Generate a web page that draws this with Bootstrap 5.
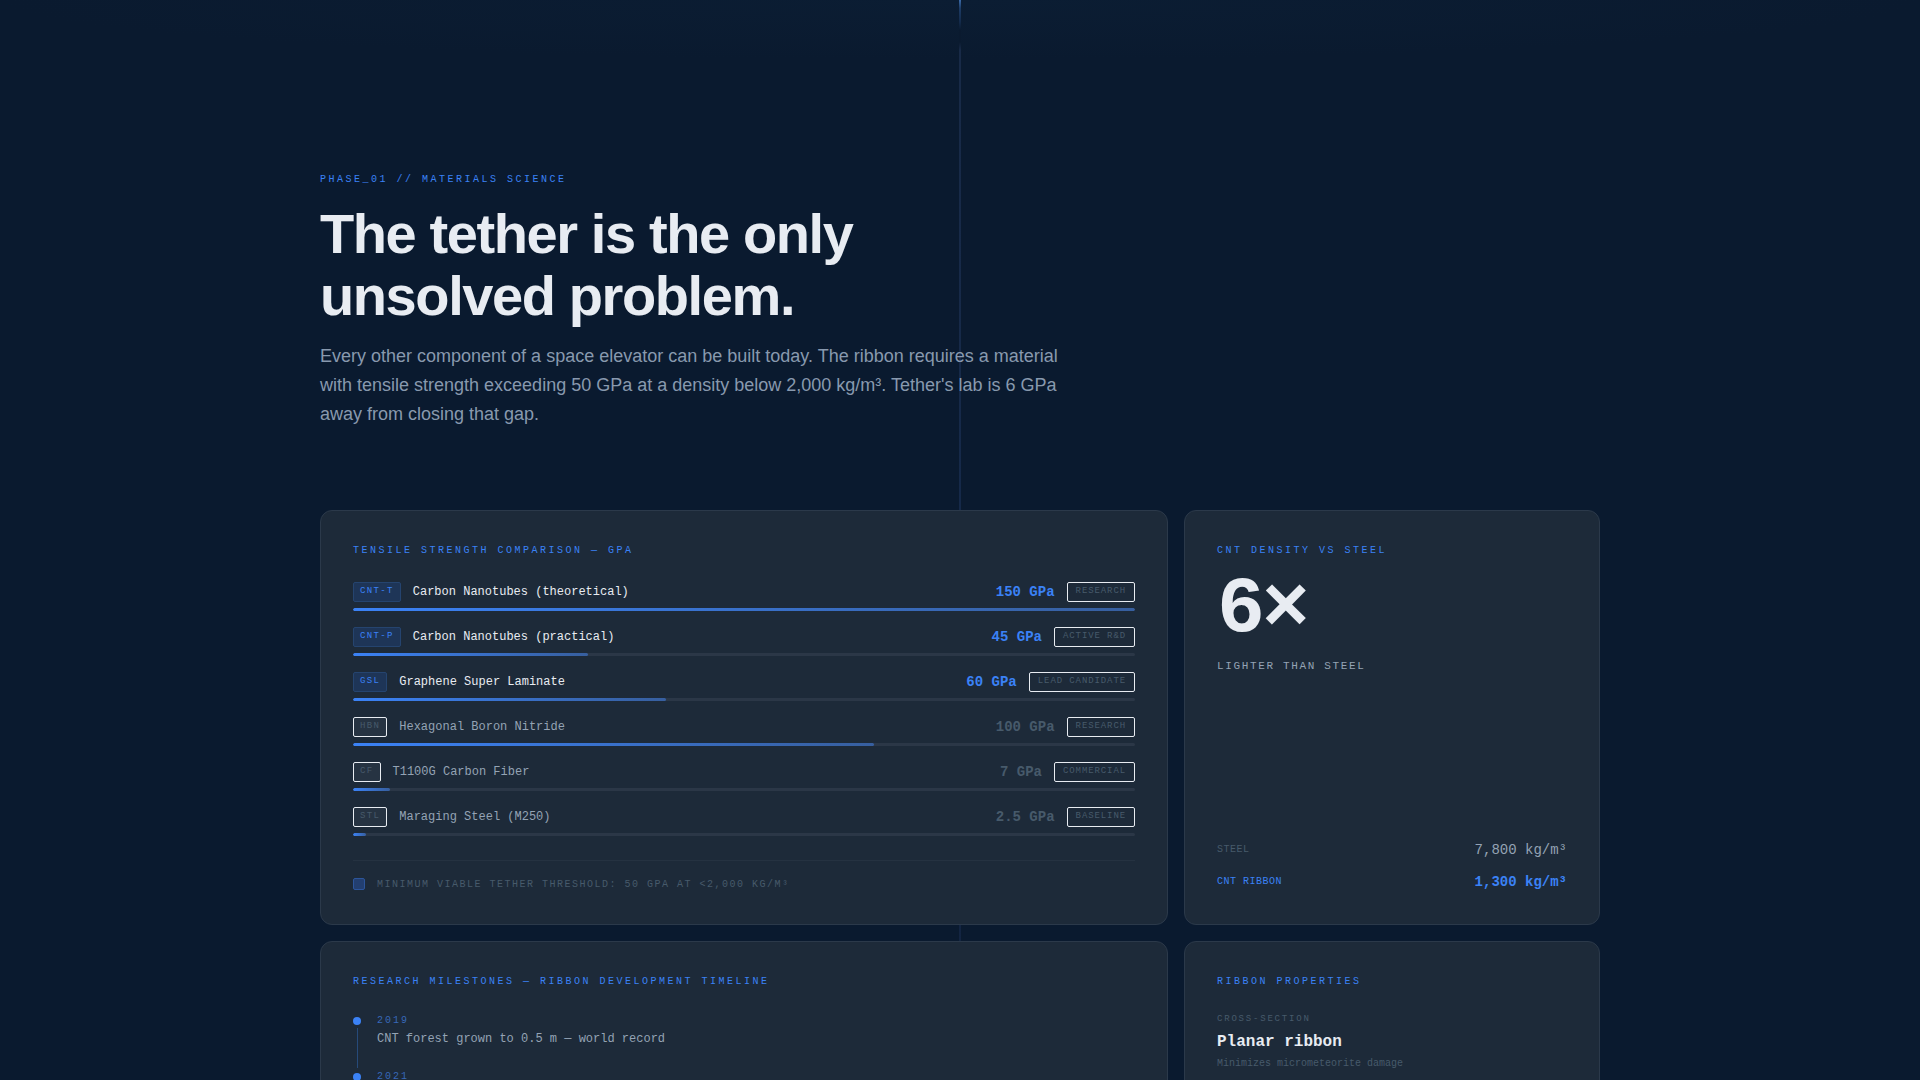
<!DOCTYPE html>
<html lang="en">
<head>
<meta charset="utf-8">
<meta name="viewport" content="width=device-width, initial-scale=1">
<title>Tether — Materials Science</title>
<link href="https://cdn.jsdelivr.net/npm/bootstrap@5.3.0/dist/css/bootstrap.min.css" rel="stylesheet">
<style>
  :root { --navy: #0a1a2f; --slate: #1d2a39; --blue: #3b82f6; --ice: #e8ecf2; --soft: #8899ae; --dim: #475a6b; }
  body { background: var(--navy); color: var(--ice); font-family: "Liberation Sans", Arial, sans-serif; line-height: 1.5; }
  .mono { font-family: "Liberation Mono", "Courier New", monospace; }
  .phase { position: relative; height: 100vh; overflow: hidden; padding-top: 172px;
    background: radial-gradient(ellipse 50% 60px at 50% 0, #0b1d33, transparent); }
  .cable { position: absolute; top: 0; bottom: 0; left: 50%; width: 2px; margin-left: -1px;
    background: linear-gradient(to bottom, #3a6aa8 0, #1d3c66 8px, #132a4a 22px, var(--navy) 30px, var(--navy) 42px, #182a47 50px, #152949 50%, #12233f 100%); }
  .wrap { position: relative; max-width: 1304px; padding-inline: 12px; }
  .eyebrow, .panel-title { font-size: 10px; font-weight: 400; letter-spacing: .25em; color: var(--blue); text-transform: uppercase; line-height: 15px; }
  .eyebrow { margin-bottom: 16px; }
  .headline { font-size: 56px; font-weight: 700; line-height: 1.1; letter-spacing: -.025em; max-width: 640px; margin-bottom: 16px; }
  .intro { font-size: 18px; line-height: 29px; color: var(--soft); max-width: 760px; margin-bottom: 81px; }
  .panel { background: var(--slate); border: 1px solid #2b394a; border-radius: 12px; padding: 32px; }
  .panel-title { margin-bottom: 24px; }
  .mat-head { height: 20px; margin-bottom: 6px; line-height: 18px; font-size: 12px; gap: 12px; }
  .mat + .mat { margin-top: 16px; }
  .code, .stage { border: 1px solid var(--ice); border-radius: 2px; font-size: 9px; line-height: 12px; padding: 2px 6px; height: 20px; color: var(--dim); }
  .code { background: #263342; letter-spacing: .15em; }
  .stage { letter-spacing: .1em; padding-inline: 8px; text-transform: uppercase; }
  .hot .code { background: #1e3557; border-color: #25446f; color: var(--blue); }
  .mat-name { color: #94a3b4; }
  .hot .mat-name { color: var(--ice); }
  .val { font-size: 14px; font-weight: 700; color: var(--dim); }
  .hot .val { color: var(--blue); }
  .track { height: 3px; border-radius: 2px; background: #2b3747; overflow: hidden; }
  .fill { height: 3px; border-radius: 2px; background: linear-gradient(90deg, #3b82f6, #375f9f); }
  .threshold { margin-top: 24px; padding-top: 16px; border-top: 1px solid #253241; gap: 12px; font-size: 10px; line-height: 15px; letter-spacing: .15em; color: var(--dim); text-transform: uppercase; }
  .swatch { width: 12px; height: 12px; margin-top: 1px; border: 1px solid #2c559b; border-radius: 2px; background: #233f70; }
  .six { font-size: 80px; font-weight: 700; line-height: 80px; letter-spacing: -.04em; }
  .lighter { font-size: 11px; line-height: 16px; letter-spacing: .15em; color: #94a3b4; margin-top: 8px; }
  .density { font-size: 14px; line-height: 20px; color: #94a3b4; gap: 12px; }
  .density dt { font-size: 10px; letter-spacing: .05em; font-weight: 400; color: var(--dim); }
  .density .cnt dt { color: var(--blue); }
  .density .cnt dd { color: var(--blue); font-weight: 700; }
  .step { min-height: 56px; gap: 16px; }
  .rail { width: 8px; }
  .dot { width: 8px; height: 8px; border-radius: 50%; background: var(--blue); margin-top: 4px; }
  .stem { width: 1px; background: #264a7a; margin-top: 3px; margin-bottom: 1px; }
  .year { font-size: 10px; line-height: 15px; letter-spacing: .2em; color: #3768b8; }
  .event { font-size: 12px; line-height: 18px; color: #94a3b4; margin-top: 2px; }
  .prop-label { font-size: 9px; line-height: 13px; letter-spacing: .2em; color: var(--dim); }
  .prop-value { font-size: 16px; line-height: 24px; font-weight: 700; margin-top: 4px; }
  .prop-note { font-size: 10px; line-height: 15px; color: var(--dim); margin-top: 2px; }
</style>
</head>
<body>
<main class="phase">
  <div class="cable"></div>
  <div class="wrap container-fluid mx-auto">
    <header>
      <p class="eyebrow mono">Phase_01 // Materials Science</p>
      <h1 class="headline">The tether is the only unsolved problem.</h1>
      <p class="intro">Every other component of a space elevator can be built today. The ribbon requires a material with tensile strength exceeding 50 GPa at a density below 2,000 kg/m³. Tether's lab is 6 GPa away from closing that gap.</p>
    </header>
    <div class="row g-3 mono">
      <div class="col-8">
        <section class="panel h-100">
          <h2 class="panel-title">Tensile strength comparison — GPa</h2>
          <div class="mat hot">
            <div class="mat-head d-flex align-items-center"><span class="code">CNT-T</span><span class="mat-name">Carbon Nanotubes (theoretical)</span><span class="val ms-auto">150 GPa</span><span class="stage">Research</span></div>
            <div class="track"><div class="fill" style="width:100%"></div></div>
          </div>
          <div class="mat hot">
            <div class="mat-head d-flex align-items-center"><span class="code">CNT-P</span><span class="mat-name">Carbon Nanotubes (practical)</span><span class="val ms-auto">45 GPa</span><span class="stage">Active R&amp;D</span></div>
            <div class="track"><div class="fill" style="width:30%"></div></div>
          </div>
          <div class="mat hot">
            <div class="mat-head d-flex align-items-center"><span class="code">GSL</span><span class="mat-name">Graphene Super Laminate</span><span class="val ms-auto">60 GPa</span><span class="stage">Lead candidate</span></div>
            <div class="track"><div class="fill" style="width:40%"></div></div>
          </div>
          <div class="mat">
            <div class="mat-head d-flex align-items-center"><span class="code">HBN</span><span class="mat-name">Hexagonal Boron Nitride</span><span class="val ms-auto">100 GPa</span><span class="stage">Research</span></div>
            <div class="track"><div class="fill" style="width:66.67%"></div></div>
          </div>
          <div class="mat">
            <div class="mat-head d-flex align-items-center"><span class="code">CF</span><span class="mat-name">T1100G Carbon Fiber</span><span class="val ms-auto">7 GPa</span><span class="stage">Commercial</span></div>
            <div class="track"><div class="fill" style="width:4.67%"></div></div>
          </div>
          <div class="mat">
            <div class="mat-head d-flex align-items-center"><span class="code">STL</span><span class="mat-name">Maraging Steel (M250)</span><span class="val ms-auto">2.5 GPa</span><span class="stage">Baseline</span></div>
            <div class="track"><div class="fill" style="width:1.67%"></div></div>
          </div>
          <div class="threshold d-flex align-items-start"><span class="swatch"></span><span>Minimum viable tether threshold: 50 GPa at &lt;2,000 kg/m³</span></div>
        </section>
      </div>
      <div class="col-4">
        <section class="panel h-100 d-flex flex-column">
          <h2 class="panel-title mb-2 pb-1">CNT density vs steel</h2>
          <div class="six">6×</div>
          <div class="lighter">LIGHTER THAN STEEL</div>
          <dl class="density d-flex flex-column mt-auto mb-0">
            <div class="d-flex justify-content-between"><dt>STEEL</dt><dd class="m-0">7,800 kg/m³</dd></div>
            <div class="cnt d-flex justify-content-between"><dt>CNT RIBBON</dt><dd class="m-0">1,300 kg/m³</dd></div>
          </dl>
        </section>
      </div>
      <div class="col-8">
        <section class="panel h-100">
          <h2 class="panel-title">Research milestones — Ribbon development timeline</h2>
          <div class="step d-flex">
            <div class="rail d-flex flex-column align-items-center"><span class="dot"></span><span class="stem flex-grow-1"></span></div>
            <div><div class="year">2019</div><div class="event">CNT forest grown to 0.5 m — world record</div></div>
          </div>
          <div class="step d-flex">
            <div class="rail d-flex flex-column align-items-center"><span class="dot"></span></div>
            <div><div class="year">2021</div></div>
          </div>
        </section>
      </div>
      <div class="col-4">
        <section class="panel h-100">
          <h2 class="panel-title">Ribbon properties</h2>
          <div class="prop-label">CROSS-SECTION</div>
          <div class="prop-value">Planar ribbon</div>
          <div class="prop-note">Minimizes micrometeorite damage</div>
        </section>
      </div>
    </div>
  </div>
</main>
<script src="https://cdn.jsdelivr.net/npm/bootstrap@5.3.0/dist/js/bootstrap.bundle.min.js"></script>
</body>
</html>
